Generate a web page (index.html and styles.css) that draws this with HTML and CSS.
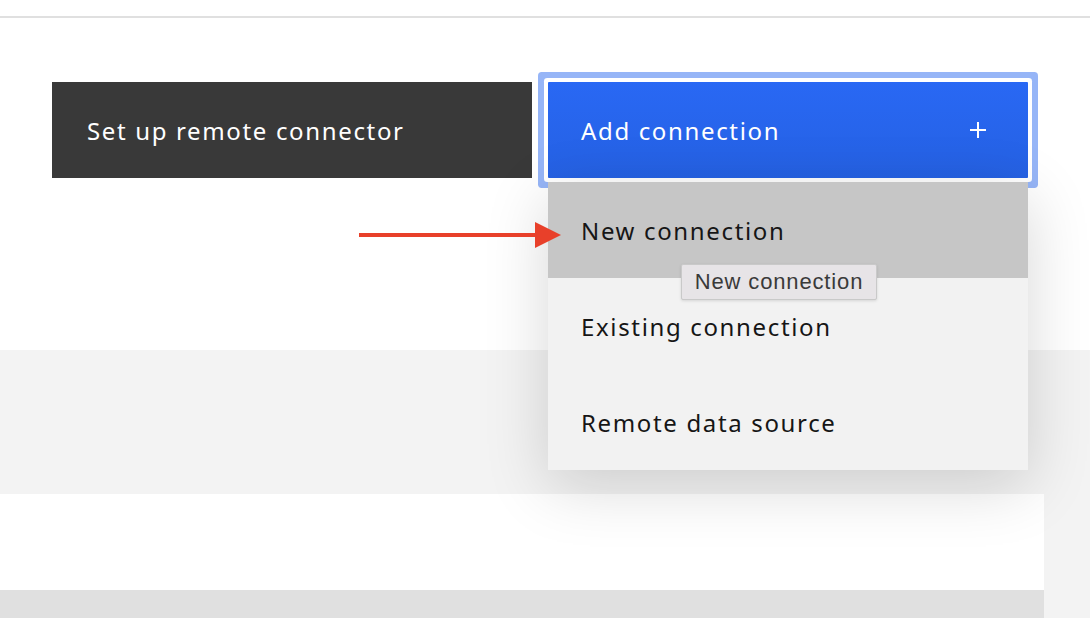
FILE: index.html
```html
<!DOCTYPE html>
<html lang="en">
<head>
<meta charset="utf-8">
<title>Add connection</title>
<link rel="stylesheet" href="styles.css">
</head>
<body>
  <div class="topbar"></div>
  <div class="toolbar">
    <button class="btn btn-dark">Set up remote connector</button>
    <div class="dropdown">
      <button class="btn btn-primary">
        <span>Add connection</span>
        <svg class="plus" width="16" height="16" viewBox="0 0 16 16"><path d="M8 0v16M0 8h16" stroke="#fff" stroke-width="2" fill="none"/></svg>
      </button>
      <ul class="menu">
        <li class="menu-item is-hover">New connection</li>
        <li class="menu-item">Existing connection</li>
        <li class="menu-item">Remote data source</li>
      </ul>
      <div class="tooltip">New connection</div>
      <svg class="arrow" width="204" height="28" viewBox="0 0 204 28"><path d="M0 13h180" stroke="#e8402a" stroke-width="4"/><path d="M176 0L202 13L176 26Z" fill="#e8402a"/></svg>
    </div>
  </div>
  <div class="content">
    <div class="panel"></div>
    <div class="strip"></div>
  </div>
</body>
</html>
```
FILE: styles.css
```css
html, body {
  margin: 0;
  padding: 0;
  background: #ffffff;
  font-family: "Noto Sans", "Liberation Sans", sans-serif;
  overflow: hidden;
}

.topbar {
  height: 16px;
  border-bottom: 2px solid #e0e0e0;
}

.toolbar {
  height: 332px;
  box-sizing: border-box;
  padding: 64px 0 0 52px;
  display: flex;
  align-items: flex-start;
  gap: 16px;
}

.btn {
  width: 480px;
  height: 96px;
  border: 0;
  margin: 0;
  font-family: inherit;
  font-size: 24px;
  letter-spacing: 1.65px;
  color: #ffffff;
  text-align: left;
  padding: 0 0 0 35px;
  display: flex;
  align-items: center;
  box-sizing: border-box;
}

.btn-dark {
  background: #393939;
}

.dropdown {
  position: relative;
  width: 480px;
  z-index: 2;
}

.btn-primary {
  background: linear-gradient(180deg, #2968f4 0%, #2561e3 100%);
  justify-content: space-between;
  padding: 0 42px 0 33px;
  border-radius: 1px;
  box-shadow: 0 0 0 4px #ffffff, 0 0 0 10px #96b5f7;
}

.plus {
  display: block;
}

.menu {
  position: absolute;
  top: 100px;
  left: 0;
  width: 480px;
  margin: 0;
  padding: 0;
  list-style: none;
  background: #f2f2f2;
  box-shadow: 0 16px 60px rgba(0, 0, 0, 0.16);
}

.menu-item {
  height: 96px;
  box-sizing: border-box;
  padding-left: 33px;
  display: flex;
  align-items: center;
  font-size: 24px;
  letter-spacing: 1.65px;
  color: #161616;
}

.menu-item.is-hover {
  background: #c6c6c6;
}

.tooltip {
  position: absolute;
  left: 133px;
  top: 182px;
  width: 196px;
  height: 36px;
  box-sizing: border-box;
  background: #e7e4e7;
  border: 1px solid #c9c9c9;
  border-radius: 2px;
  box-shadow: 0 1px 3px rgba(0, 0, 0, 0.12);
  font-family: "Liberation Sans", Arial, sans-serif;
  font-size: 22px;
  letter-spacing: 0.85px;
  color: #3a3a3a;
  display: flex;
  align-items: center;
  justify-content: center;
}

.arrow {
  position: absolute;
  left: -189px;
  top: 140px;
}

.content {
  height: 270px;
  background: #f3f3f3;
  padding-top: 144px;
  box-sizing: border-box;
}

.panel {
  width: 1044px;
  height: 96px;
  background: #ffffff;
}

.strip {
  width: 1044px;
  height: 30px;
  background: #e0e0e0;
}
```
